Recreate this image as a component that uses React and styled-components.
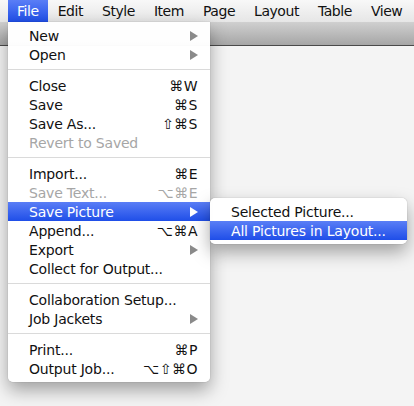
import React from "react"
import styled, { createGlobalStyle } from "styled-components"

const GlobalStyle = createGlobalStyle`
  html, body {
    margin: 0;
    padding: 0;
    background: #f4f4f4;
  }
  body {
    font-family: "DejaVu Sans", "Liberation Sans", sans-serif;
    -webkit-font-smoothing: antialiased;
  }
`

const Screen = styled.div`
  position: relative;
  width: 414px;
  height: 406px;
  overflow: hidden;
  background: #f4f4f4;
`

const MenuBar = styled.div`
  display: flex;
  align-items: center;
  height: 22px;
  padding-left: 8px;
  background: linear-gradient(#f8f8f8, #e6e6e6);
  font-size: 14px;
  letter-spacing: -0.45px;
  color: #111;
`

const MenuTitle = styled.div`
  height: 22px;
  line-height: 22px;
  padding: 0 9px;
  margin-right: 1px;
  color: ${(p) => (p.active ? "#fff" : "#111")};
  background: ${(p) =>
    p.active ? "linear-gradient(#5a7ef6, #1f4ee8)" : "transparent"};
`

const WindowBar = styled.div`
  height: 23px;
  background: linear-gradient(#d0d0d0, #a6a6a6);
  border-bottom: 1px solid #4a4a4a;
`

const Dropdown = styled.div`
  position: absolute;
  left: ${(p) => p.left}px;
  top: ${(p) => p.top}px;
  width: ${(p) => p.width}px;
  padding: 4px 0;
  background: rgba(255, 255, 255, 0.98);
  border-radius: ${(p) => (p.sub ? "5px" : "0 0 5px 5px")};
  box-shadow: 0 8px 18px rgba(0, 0, 0, 0.35), 0 0 1px rgba(0, 0, 0, 0.4);
  font-size: 14px;
  letter-spacing: -0.2px;
  z-index: ${(p) => (p.sub ? 3 : 2)};
`

const Row = styled.div`
  display: flex;
  align-items: center;
  justify-content: space-between;
  height: 19px;
  padding: 0 12px 0 21px;
  color: ${(p) => (p.active ? "#fff" : p.disabled ? "#a6a6a6" : "#111")};
  background: ${(p) =>
    p.active ? "linear-gradient(#5a7ef6, #1f4ee8)" : "transparent"};
  white-space: nowrap;
`

const Shortcut = styled.span`
  letter-spacing: 0.5px;
`

const Arrow = styled.span`
  width: 0;
  height: 0;
  border-top: 5px solid transparent;
  border-bottom: 5px solid transparent;
  border-left: 8px solid ${(p) => (p.active ? "#fff" : "#8a8a8a")};
`

const Separator = styled.div`
  height: 1px;
  margin: 5px 0 6px;
  background: #dadada;
`

const menus = ["File", "Edit", "Style", "Item", "Page", "Layout", "Table", "View"]

const fileItems = [
  { label: "New", arrow: true },
  { label: "Open", arrow: true },
  "sep",
  { label: "Close", key: "⌘W" },
  { label: "Save", key: "⌘S" },
  { label: "Save As...", key: "⇧⌘S" },
  { label: "Revert to Saved", disabled: true },
  "sep",
  { label: "Import...", key: "⌘E" },
  { label: "Save Text...", key: "⌥⌘E", disabled: true },
  { label: "Save Picture", arrow: true, active: true },
  { label: "Append...", key: "⌥⌘A" },
  { label: "Export", arrow: true },
  { label: "Collect for Output..." },
  "sep",
  { label: "Collaboration Setup..." },
  { label: "Job Jackets", arrow: true },
  "sep",
  { label: "Print...", key: "⌘P" },
  { label: "Output Job...", key: "⌥⇧⌘O" },
]

const subItems = [
  { label: "Selected Picture..." },
  { label: "All Pictures in Layout...", active: true },
]

function MenuRows({ items }) {
  return items.map((item, i) =>
    item === "sep" ? (
      <Separator key={i} />
    ) : (
      <Row key={i} active={item.active} disabled={item.disabled}>
        <span>{item.label}</span>
        {item.key && <Shortcut>{item.key}</Shortcut>}
        {item.arrow && <Arrow active={item.active} />}
      </Row>
    )
  )
}

export default function App() {
  return (
    <Screen>
      <GlobalStyle />
      <MenuBar>
        {menus.map((m) => (
          <MenuTitle key={m} active={m === "File"}>
            {m}
          </MenuTitle>
        ))}
      </MenuBar>
      <WindowBar />
      <Dropdown left={8} top={22} width={202}>
        <MenuRows items={fileItems} />
      </Dropdown>
      <Dropdown left={210} top={198} width={197} sub>
        <MenuRows items={subItems} />
      </Dropdown>
    </Screen>
  )
}
